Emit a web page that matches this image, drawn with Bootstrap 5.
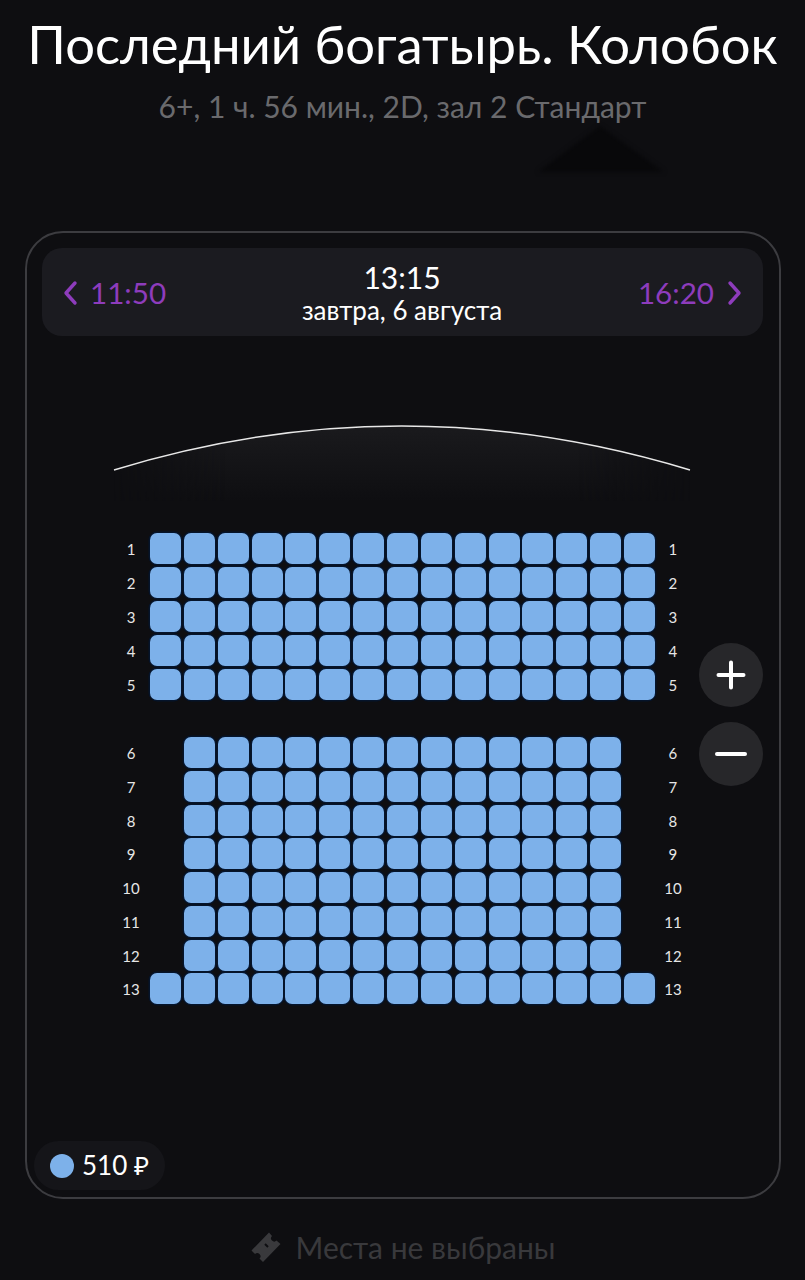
<!doctype html>
<html lang="ru"><head><meta charset="utf-8"><title>Зал</title>
<link href="https://cdn.jsdelivr.net/npm/bootstrap@5.3.0/dist/css/bootstrap.min.css" rel="stylesheet">
<style>
html,body{height:1280px;overflow:hidden}
body{background:#0e0e11;color:#fff;font-family:Lato,"Noto Sans",sans-serif}
.ttl{font-size:52.6px;line-height:64px;margin:12px 0 0;font-weight:400;white-space:nowrap}
.subt{font-size:30px;line-height:36px;margin:12px 0 0;color:#6a6a6d}
.shadow-wrap{height:107px}
.shadow-wrap svg{display:block;margin-left:538px;padding-top:2px;height:48px;filter:blur(2px)}
.frame{margin:0 24px 0 25px;height:968px;border:2px solid #3c3c40;border-radius:38px;padding:15px 16px 0 15px;position:relative}
.timebar{height:88px;background:#1b1b20;border-radius:20px;padding:0 20px}
.tnav{color:#8e3cbc;font-size:29.600px;line-height:1;padding-top:2px}
.tprev{gap:12px}
.tnext{gap:13px}
.tnow{font-size:30px;line-height:34px}
.tdate{font-size:26px;line-height:30px;margin-top:1px}
.scr{margin:89px 0 0 70px;display:block}
.hall{margin:32px 0 0 72px;width:620px}
.seatrow{display:grid;grid-template-columns:36px repeat(15,33.86px) 28px;height:34px;align-items:start}
.seatrow.lower{height:33.75px}
.rown{font-size:15px;line-height:33px;text-align:center;padding-right:2px;color:#e6e6e6}
.rown.rgt{padding:0 0 0 2px;white-space:nowrap}
.st{width:31px;height:31px;background:#7db1ea;border-radius:7px;box-shadow:0 0 0 1.5px #05142b}
.gapr{height:34px}
.zoomb{position:absolute;left:672px;width:64px;height:64px;border-radius:50%;background:#27272a}
.zoomb svg{display:block}
.zplus{top:410px}.zminus{top:489px}
.pricepill{position:absolute;left:7px;top:908px;height:49px;border-radius:25px;background:#151519;padding:0 16px;gap:8px;font-size:26px}
.dot{width:24px;height:24px;border-radius:50%;background:#7db1ea;display:block}
.foot{color:#39393c;font-size:30px;line-height:36px;margin-top:30px;gap:14px}
</style></head><body>
<h1 class="ttl text-center">Последний богатырь. Колобок</h1>
<p class="subt text-center">6+, 1 ч. 56 мин., 2D, зал 2 Стандарт</p>
<div class="shadow-wrap"><svg width="126" height="46" viewBox="0 0 126 46"><path d="M0 46 62 0 126 46Z" fill="#08080a"/></svg></div>
<div class="frame">
  <div class="timebar d-flex align-items-center justify-content-between">
    <div class="tnav tprev d-flex align-items-center">
      <svg width="16" height="26" viewBox="0 0 16 26" fill="none"><path d="M13 3 4 13l9 10" stroke="#8e3cbc" stroke-width="3.4" stroke-linecap="round" stroke-linejoin="round"/></svg>
      <span>11:50</span>
    </div>
    <div class="text-center">
      <div class="tnow">13:15</div>
      <div class="tdate">завтра, 6 августа</div>
    </div>
    <div class="tnav tnext d-flex align-items-center">
      <span>16:20</span>
      <svg width="16" height="26" viewBox="0 0 16 26" fill="none"><path d="m3 3 9 10-9 10" stroke="#8e3cbc" stroke-width="3.4" stroke-linecap="round" stroke-linejoin="round"/></svg>
    </div>
  </div>
  <svg class="scr" width="580" height="76" viewBox="0 0 580 76">
    <defs>
      <linearGradient id="g" x1="0" y1="0" x2="0" y2="1"><stop offset="0" stop-color="#1a1a1d"/><stop offset="1" stop-color="#0e0e11"/></linearGradient>
      <linearGradient id="fade" x1="0" y1="0" x2="1" y2="0"><stop offset="0" stop-color="#fff" stop-opacity="0"/><stop offset=".2" stop-color="#fff"/><stop offset=".8" stop-color="#fff"/><stop offset="1" stop-color="#fff" stop-opacity="0"/></linearGradient>
      <mask id="m"><rect width="580" height="76" fill="url(#fade)"/></mask>
    </defs>
    <path d="M2 45Q289-43 578 45V76H2Z" fill="url(#g)" mask="url(#m)"/>
    <path d="M2 45Q289-43 578 45" fill="none" stroke="#e8e8e8" stroke-width="1.400"/>
  </svg>
  <div class="hall" id="hall"></div>
  <div class="zoomb zplus d-flex align-items-center justify-content-center"><svg width="32" height="32" viewBox="0 0 32 32"><path d="M3.500 16h25M16 3.500v25" stroke="#fff" stroke-width="4" stroke-linecap="round"/></svg></div>
  <div class="zoomb zminus d-flex align-items-center justify-content-center"><svg width="32" height="32" viewBox="0 0 32 32"><path d="M2 16h28" stroke="#fff" stroke-width="4" stroke-linecap="round"/></svg></div>
  <div class="pricepill d-flex align-items-center"><span class="dot"></span><span>510 ₽</span></div>
</div>
<div class="foot d-flex align-items-center justify-content-center">
  <svg width="32" height="32" viewBox="0 0 32 32"><path d="M19 1.500 22 5a3 3 0 0 0 4.500 4.500l4 3.500L13 31l-3.500-3.500A3 3 0 0 0 5 23l-3.500-3.500Z" fill="#39393c"/><path d="m15 13 3 3" stroke="#0e0e11" stroke-width="2"/></svg>
  <span>Места не выбраны</span>
</div>
<script>
const h=document.getElementById('hall');let out='';
for(let r=1;r<=13;r++){
  if(r==6)out+='<div class="gapr"></div>';
  let narrow=r>=6&&r<=12,s='<span class="rown">'+r+'</span>';
  for(let c=0;c<15;c++)s+=(narrow&&(c==0||c==14))?'<span></span>':'<span class="st"></span>';
  s+='<span class="rown rgt">'+r+'</span>';
  out+='<div class="seatrow'+(r>=6?' lower':'')+'">'+s+'</div>';
}
h.innerHTML=out;
</script>
</body></html>
